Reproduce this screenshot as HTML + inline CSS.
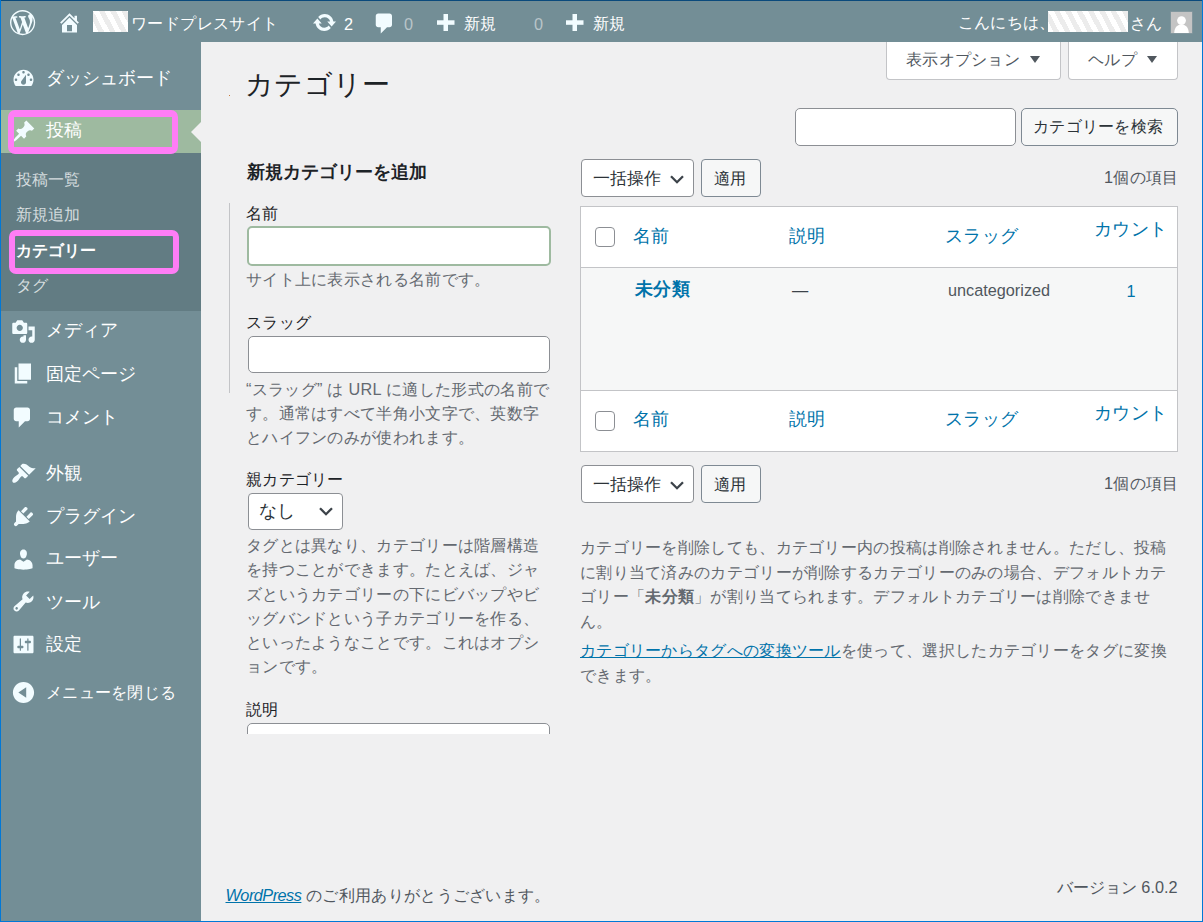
<!DOCTYPE html>
<html lang="ja"><head><meta charset="utf-8"><title>カテゴリー</title>
<style>
html,body{margin:0;padding:0}
body{width:1203px;height:922px;overflow:hidden;position:relative;background:#f0f0f1;font-family:"Liberation Sans",sans-serif;font-size:16.25px;color:#3c434a}
.a{position:absolute}
.t{position:absolute;white-space:nowrap;line-height:20px}
svg{position:absolute;overflow:visible}
.ab{color:#fff}
.mi{font-size:17.5px;color:#fff;left:46px}
.sm{font-size:16.25px;color:#d5dddf;left:16px}
.ic{fill:#f2fcff}
.box{position:absolute;box-sizing:border-box}
.lnk{color:#0073aa}
.th{font-size:17.5px}
#main .t{letter-spacing:.3px;margin-top:-.8px}
#menu .t{margin-top:-.6px}
#adminbar .t{letter-spacing:.4px}
.desc{color:#646970}
.stripe{background:repeating-linear-gradient(62deg,#fff 0 5px,#ececec 5px 10px)}
</style></head>
<body>
<!-- window borders -->
<div class="a" style="left:0;top:0;width:1203px;height:1px;background:#0a4a7c"></div>
<div class="a" style="left:0;top:0;width:1px;height:922px;background:#0078d7"></div>
<div class="a" style="left:1202px;top:0;width:1px;height:922px;background:#0078d7"></div>
<div class="a" style="left:0;top:921px;width:1203px;height:1px;background:#0078d7"></div>

<!-- admin bar -->
<div class="a" style="left:1px;top:1px;width:1201px;height:41px;background:#738e96"></div>
<!-- sidebar -->
<div class="a" style="left:1px;top:42px;width:200px;height:879px;background:#738e96"></div>
<div class="a" style="left:1px;top:110px;width:200px;height:43px;background:#9ebaa0"></div>
<div class="a" style="left:1px;top:153px;width:200px;height:158px;background:#627c83"></div>
<svg style="left:191px;top:122px" width="10" height="20"><path d="M10 0L0 10L10 20Z" fill="#f0f0f1"/></svg>

<div id="adminbar">
<svg style="left:9.8px;top:9.6px" width="25.2" height="25.2" viewBox="0 0 20 20"><path class="ic" fill-rule="evenodd" d="M20 10c0-5.51-4.490-10-10-10C4.48 0 0 4.49 0 10c0 5.52 4.48 10 10 10 5.51 0 10-4.48 10-10zM7.78 15.37L4.37 6.22c.55-.02 1.17-.08 1.17-.08.5-.06.44-1.13-.06-1.11 0 0-1.45.11-2.37.11-.18 0-.37 0-.58-.01C4.12 2.69 6.87 1.11 10 1.11c2.33 0 4.45.87 6.05 2.34-.68-.11-1.65.39-1.65 1.58 0 .74.45 1.36.9 2.1.35.61.55 1.36.55 2.46 0 1.49-1.4 5-1.4 5l-3.03-8.37c.54-.02.82-.17.82-.17.5-.05.44-1.25-.06-1.22 0 0-1.44.12-2.38.12-.87 0-2.33-.12-2.33-.12-.5-.03-.56 1.2-.06 1.22l.92.08 1.26 3.41zM17.41 10c.24-.64.74-1.87.43-4.25.7 1.29 1.05 2.71 1.05 4.25 0 3.29-1.73 6.24-4.4 7.78.97-2.59 1.94-5.2 2.92-7.78zM6.1 18.09C3.12 16.65 1.11 13.53 1.11 10c0-1.3.23-2.48.72-3.59C3.25 10.3 4.67 14.2 6.1 18.09zm4.03-6.63l2.58 6.980c-.86.29-1.76.45-2.710.45-.79 0-1.570-.11-2.29-.33.81-2.38 1.62-4.74 2.42-7.1z"/></svg>
<svg style="left:57px;top:10px" width="25" height="25" viewBox="0 0 20 20"><path class="ic" d="M16 8.5l1.53 1.53-1.06 1.06L10 4.62l-6.47 6.47-1.06-1.06L10 2.5l4 4v-2h2v4zm-6-2.46l6 5.99V18H4v-5.97zM12 17v-5H8v5h4z" fill-rule="evenodd"/></svg>
<div class="a stripe" style="left:93px;top:11px;width:35px;height:21px"></div>
<div class="t ab" style="left:131px;top:13px">ワードプレスサイト</div>
<svg style="left:312px;top:10px" width="25" height="25" viewBox="0 0 20 20"><path class="ic" d="M10.2 3.28c3.53 0 6.430 2.61 6.92 6h2.08l-3.5 4-3.5-4h2.32c-.45-1.97-2.21-3.45-4.32-3.45-1.45 0-2.73.71-3.54 1.78L4.950 5.66C6.23 4.2 8.11 3.28 10.2 3.28zm-.4 13.44c-3.52 0-6.43-2.61-6.920-6H.8l3.5-4c1.17 1.33 2.33 2.67 3.5 4H5.48c.45 1.97 2.21 3.45 4.32 3.45 1.45 0 2.73-.71 3.54-1.78l1.71 1.95c-1.28 1.46-3.15 2.38-5.25 2.38z"/></svg>
<div class="t ab" style="left:344px;top:14px">2</div>
<svg style="left:372px;top:11px" width="25" height="25" viewBox="0 0 20 20"><path class="ic" d="M5 2h9c1.1 0 2 .9 2 2v7c0 1.1-.9 2-2 2h-2l-5 5v-5H5c-1.1 0-2-.9-2-2V4c0-1.1.9-2 2-2z"/></svg>
<div class="t" style="left:404px;top:14px;color:#b9c5c9">0</div>
<svg style="left:437px;top:14px" width="18" height="17"><rect x="6.5" y="0" width="4.5" height="17" fill="#f2fcff"/><rect x="0" y="6.3" width="17.5" height="4.5" fill="#f2fcff"/></svg>
<div class="t ab" style="left:464px;top:13px">新規</div>
<div class="t" style="left:534px;top:14px;color:#b9c5c9">0</div>
<svg style="left:566px;top:14px" width="18" height="17"><rect x="6.5" y="0" width="4.5" height="17" fill="#f2fcff"/><rect x="0" y="6.3" width="17.5" height="4.5" fill="#f2fcff"/></svg>
<div class="t ab" style="left:593px;top:13px">新規</div>
<div class="t ab" style="left:957.5px;top:11.5px">こんにちは、</div>
<div class="a stripe" style="left:1048px;top:11px;width:80px;height:21px"></div>
<div class="t ab" style="left:1130px;top:13px">さん</div>
<div class="a" style="left:1170.5px;top:11.5px;width:21px;height:21.5px;background:#c4c4c4;overflow:hidden;box-shadow:0 0 0 .6px #8d9ea4">
 <svg style="left:0;top:0" width="21" height="22"><circle cx="10.5" cy="8.6" r="4.4" fill="#fff"/><path d="M3.2 21.5C3.2 15.5 6.5 12.6 10.5 12.6S17.8 15.5 17.8 21.5Z" fill="#fff"/></svg>
</div>
</div>
<div id="menu">
<svg style="left:10.8px;top:65.9px" width="25" height="25" viewBox="0 0 20 20"><path class="ic" fill-rule="evenodd" d="M3.76 16h12.48c1.1-1.37 1.76-3.11 1.76-5 0-4.42-3.58-8-8-8s-8 3.58-8 8c0 1.89.66 3.63 1.760 5zM10 4c.55 0 1 .45 1 1s-.45 1-1 1-1-.45-1-1 .45-1 1-1zM6 6c.55 0 1 .45 1 1s-.45 1-1 1-1-.45-1-1 .45-1 1-1zm8 0c.55 0 1 .45 1 1s-.45 1-1 1-1-.45-1-1 .45-1 1-1zm-5.37 5.55L12 7v6c0 1.1-.9 2-2 2s-2-.9-2-2c0-.57.24-1.08.63-1.45zM4 10c.55 0 1 .45 1 1s-.45 1-1 1-1-.45-1-1 .45-1 1-1zm12 0c.55 0 1 .45 1 1s-.45 1-1 1-1-.45-1-1 .45-1 1-1z"/></svg>
<div class="t mi" style="top:68.4px">ダッシュボード</div>

<svg style="left:11.3px;top:119.2px" width="25" height="25" viewBox="0 0 20 20"><path class="ic" d="M10.44 3.02l1.82-1.82 6.36 6.35-1.83 1.82c-1.05-.68-2.48-.57-3.41.36l-.75.75c-.92.93-1.04 2.35-.35 3.41l-1.83 1.82-2.41-2.41-2.8 2.79c-.42.42-3.38 2.71-3.8 2.29s1.86-3.39 2.28-3.81l2.79-2.79L4.1 9.360l1.83-1.82c1.05.69 2.48.57 3.4-.36l.75-.75c.93-.92 1.05-2.35.36-3.41z"/></svg>
<div class="t mi" style="top:121px">投稿</div>

<div class="t sm" style="top:169.6px">投稿一覧</div>
<div class="t sm" style="top:205px">新規追加</div>
<div class="t sm" style="top:240.7px;color:#fff;font-weight:bold">カテゴリー</div>
<div class="t sm" style="top:275.5px">タグ</div>

<svg style="left:10.75px;top:318.75px" width="25" height="25" viewBox="0 0 20 20"><path class="ic" fill-rule="evenodd" d="M13 11V4c0-.55-.45-1-1-1h-1.67L9 1H5L3.67 3H2c-.55 0-1 .45-1 1v7c0 .55.45 1 1 1h10c.55 0 1-.45 1-1zM7 4.5c1.38 0 2.5 1.12 2.5 2.5S8.38 9.5 7 9.5 4.5 8.38 4.5 7 5.62 4.5 7 4.5zM14 6h5v10.5c0 1.38-1.12 2.5-2.5 2.5S14 17.880 14 16.5s1.12-2.5 2.5-2.5c.17 0 .34.02.5.05V9h-3V6zm-4 8.05V13h2v3.5c0 1.38-1.12 2.5-2.5 2.5S7 17.88 7 16.5 8.12 14 9.5 14c.17 0 .34.02.5.05z"/></svg>
<div class="t mi" style="top:320.7px">メディア</div>

<svg style="left:10.85px;top:361px" width="25" height="25" viewBox="0 0 20 20"><path class="ic" d="M6 15V2h10v13H6zm-1 1h8v2H3V5h2v11z"/></svg>
<div class="t mi" style="top:364.4px">固定ページ</div>

<svg style="left:10.25px;top:404.5px" width="25" height="25" viewBox="0 0 20 20"><path class="ic" d="M5 2h9c1.1 0 2 .9 2 2v7c0 1.1-.9 2-2 2h-2l-5 5v-5H5c-1.1 0-2-.9-2-2V4c0-1.1.9-2 2-2z"/></svg>
<div class="t mi" style="top:407.2px">コメント</div>

<svg style="left:11.1px;top:460.5px" width="25" height="25" viewBox="0 0 20 20"><path class="ic" d="M14.48 11.06L7.41 3.99l1.5-1.5c.5-.56 2.3-.47 3.51.32 1.21.8 1.43 1.28 2.91 2.1 1.18.64 2.45 1.26 4.45.85zm-.71.71L6.7 4.7 4.93 6.47c-.39.39-.39 1.02 0 1.41l1.06 1.06c.39.39.39 1.03 0 1.42-.6.6-1.43 1.11-2.21 1.69-.35.26-.7.53-1.01.84C1.43 14.23.4 16.08 1.4 17.07c.99 1 2.84-.03 4.18-1.36.31-.31.58-.66.85-1.020.57-.78 1.08-1.61 1.69-2.21.39-.39 1.02-.39 1.41 0l1.06 1.06c.39.39 1.02.39 1.41 0z"/></svg>
<div class="t mi" style="top:464px">外観</div>

<svg style="left:11px;top:503.5px" width="25" height="25" viewBox="0 0 20 20"><path class="ic" d="M13.11 4.36L9.87 7.6 8 5.73l3.24-3.24c.35-.34 1.05-.2 1.56.32.52.51.66 1.21.31 1.55zm-8 1.77l.91-1.12 9.01 9.01-1.19.84c-.71.71-2.63 1.16-3.82 1.16H6.14L4.9 17.26c-.59.59-1.54.59-2.12 0-.59-.58-.59-1.530 0-2.12l1.24-1.24v-3.88c0-1.13.4-3.19 1.09-3.89zm7.26 3.97l3.24-3.24c.34-.35 1.04-.21 1.55.31.52.51.66 1.21.31 1.55l-3.24 3.25z"/></svg>
<div class="t mi" style="top:506.5px">プラグイン</div>

<svg style="left:10.55px;top:546.5px" width="25" height="25" viewBox="0 0 20 20"><path class="ic" d="M10 9.25c-2.27 0-2.73-3.44-2.73-3.44C7 4.02 7.82 2 9.970 2c2.16 0 2.98 2.02 2.71 3.81 0 0-.41 3.44-2.68 3.44zm0 2.57L12.72 10c2.39 0 4.52 2.33 4.52 4.53v2.49s-3.65 1.13-7.24 1.13c-3.65 0-7.24-1.13-7.24-1.13v-2.49c0-2.25 1.94-4.48 4.47-4.48z"/></svg>
<div class="t mi" style="top:548.5px">ユーザー</div>

<svg style="left:11px;top:589px" width="25" height="25" viewBox="0 0 20 20"><path class="ic" fill-rule="evenodd" d="M16.68 9.77c-1.34 1.34-3.3 1.67-4.95.99l-5.41 6.52c-.99.99-2.59.99-3.58 0s-.99-2.59 0-3.57l6.52-5.42c-.68-1.65-.35-3.61.99-4.95 1.28-1.28 3.12-1.62 4.72-1.06l-2.89 2.89 2.82 2.82 2.86-2.87c.53 1.58.18 3.39-1.08 4.65zM3.81 16.21c.4.39 1.04.39 1.43 0 .4-.4.4-1.04 0-1.43-.39-.4-1.03-.4-1.430 0-.39.39-.39 1.03 0 1.43z"/></svg>
<div class="t mi" style="top:593px">ツール</div>

<svg style="left:11.3px;top:632px" width="25" height="25" viewBox="0 0 20 20"><path class="ic" fill-rule="evenodd" d="M18 16V4c0-.55-.45-1-1-1H3c-.55 0-1 .45-1 1v12c0 .55.45 1 1 1h14c.55 0 1-.45 1-1zM8 11h1c.55 0 1 .45 1 1s-.45 1-1 1H8v1.5c0 .28-.22.5-.5.5s-.5-.22-.5-.5V13H6c-.55 0-1-.45-1-1s.45-1 1-1h1V5.5c0-.28.22-.5.5-.5s.5.22.5.5V11zm5-2h-1c-.55 0-1-.45-1-1s.45-1 1-1h1V5.5c0-.28.22-.5.5-.5s.5.22.5.5V7h1c.55 0 1 .45 1 1s-.45 1-1 1h-1v5.5c0 .28-.22.5-.5.5s-.5-.22-.5-.5V9z"/></svg>
<div class="t mi" style="top:635px">設定</div>

<svg style="left:10.3px;top:678.8px" width="27" height="27" viewBox="0 0 20 20"><path class="ic" fill-rule="evenodd" d="M10 2.16c4.33 0 7.84 3.51 7.84 7.84S14.33 17.84 10 17.84 2.16 14.33 2.16 10 5.71 2.16 10 2.16zm2 11.72V6.12L6.18 9.97z"/></svg>
<div class="t mi" style="top:682.6px;font-size:16.25px;letter-spacing:.3px">メニューを閉じる</div>

<!-- annotation boxes -->
<div class="box" style="left:8px;top:110px;width:169.5px;height:44px;border:6px solid #ff7df6;border-width:7px 6px;border-radius:7px"></div>
<div class="box" style="left:9px;top:230px;width:169.5px;height:43.5px;border:6px solid #ff7df6;border-radius:7px"></div>
</div>
<div id="main">
<!-- screen options / help -->
<div class="box" style="left:886px;top:42px;width:175px;height:38px;background:#fff;border:1px solid #c3c4c7;border-top:0;border-radius:0 0 4px 4px"></div>
<div class="t" style="left:906px;top:50px;color:#50575e">表示オプション</div>
<svg style="left:1029.5px;top:56px" width="10" height="7"><path d="M0 0H10L5 7Z" fill="#50575e"/></svg>
<div class="box" style="left:1068px;top:42px;width:110px;height:38px;background:#fff;border:1px solid #c3c4c7;border-top:0;border-radius:0 0 4px 4px"></div>
<div class="t" style="left:1088px;top:50px;color:#50575e">ヘルプ</div>
<svg style="left:1147px;top:56px" width="10" height="7"><path d="M0 0H10L5 7Z" fill="#50575e"/></svg>

<div class="t" style="left:245px;top:65.5px;font-size:27.6px;line-height:40px;color:#1d2327;font-weight:300">カテゴリー</div>
<div class="a" style="left:229px;top:95px;width:1px;height:1px;background:#c87a3a"></div>

<!-- search -->
<div class="box" style="left:795px;top:108px;width:221px;height:38px;background:#fff;border:1px solid #8c8f94;border-radius:5px"></div>
<div class="box" style="left:1021px;top:108px;width:157px;height:38px;background:#f6f7f7;border:1px solid #7e8993;border-radius:5px"></div>
<div class="t" style="left:1033px;top:117px;color:#2c3338">カテゴリーを検索</div>

<!-- left column -->
<div class="t" style="left:246.5px;top:162.3px;letter-spacing:0;font-size:17.6px;font-weight:bold;color:#1d2327">新規カテゴリーを追加</div>
<div class="a" style="left:229px;top:203px;width:1px;height:190px;background:#c3c4c7"></div>
<div class="t" style="left:246px;top:203.5px;color:#1d2327">名前</div>
<div class="box" style="left:247px;top:226px;width:304px;height:40px;background:#fff;border:2px solid #9ebaa0;border-radius:5px"></div>
<div class="t desc" style="left:246px;top:270px">サイト上に表示される名前です。</div>
<div class="t" style="left:246px;top:313px;color:#1d2327">スラッグ</div>
<div class="box" style="left:248px;top:336px;width:302px;height:37px;background:#fff;border:1px solid #8c8f94;border-radius:5px"></div>
<div class="t desc" style="left:246px;top:377.4px;line-height:24.4px">“スラッグ” は URL に適した形式の名前で<br>す。通常はすべて半角小文字で、英数字<br>とハイフンのみが使われます。</div>
<div class="t" style="left:246px;top:470px;color:#1d2327">親カテゴリー</div>
<div class="box" style="left:248px;top:493px;width:95px;height:37px;background:#fff;border:1px solid #8c8f94;border-radius:4px"></div>
<div class="t" style="left:259px;top:502px;color:#2c3338;font-size:17.5px">なし</div>
<svg style="left:319px;top:507px" width="15" height="10"><path d="M1 1.2L7 7.2L13 1.2" fill="none" stroke="#3c434a" stroke-width="2.3"/></svg>
<div class="t desc" style="left:246px;top:533.9px;line-height:24.2px">タグとは異なり、カテゴリーは階層構造<br>を持つことができます。たとえば、ジャ<br>ズというカテゴリーの下にビバップやビ<br>ッグバンドという子カテゴリーを作る、<br>といったようなことです。これはオプシ<br>ョンです。</div>
<div class="t" style="left:246px;top:699.5px;color:#1d2327">説明</div>
<div class="a" style="left:247px;top:723px;width:303px;height:11px;overflow:hidden">
 <div class="box" style="left:0;top:0;width:303px;height:60px;background:#fff;border:1px solid #8c8f94;border-radius:5px"></div>
</div>

<!-- table nav top -->
<div class="box" style="left:581px;top:159px;width:113px;height:38px;background:#fff;border:1px solid #8c8f94;border-radius:4px"></div>
<div class="t" style="left:593px;top:169.5px;color:#2c3338;font-size:16.9px;letter-spacing:0">一括操作</div>
<svg style="left:669.5px;top:174.5px" width="15" height="10"><path d="M1 1.2L7 7.2L13 1.2" fill="none" stroke="#3c434a" stroke-width="2.3"/></svg>
<div class="box" style="left:701px;top:159px;width:60px;height:38px;background:#f6f7f7;border:1px solid #7e8993;border-radius:4px"></div>
<div class="t" style="left:714px;top:168.6px;color:#2c3338">適用</div>
<div class="t" style="left:1104px;top:167.5px;color:#50575e">1個の項目</div>

<!-- table -->
<div class="box" style="left:580px;top:206px;width:598px;height:246px;background:#fff;border:1px solid #c3c4c7"></div>
<div class="a" style="left:581px;top:267px;width:596px;height:1px;background:#c3c4c7"></div>
<div class="a" style="left:581px;top:268px;width:596px;height:122px;background:#f6f7f7"></div>
<div class="a" style="left:581px;top:390px;width:596px;height:1px;background:#c3c4c7"></div>
<div class="box" style="left:595px;top:227px;width:20px;height:20px;background:#fff;border:1px solid #8c8f94;border-radius:4px"></div>
<div class="t lnk th" style="left:633px;top:227.2px">名前</div>
<div class="t lnk th" style="left:789px;top:227.2px">説明</div>
<div class="t lnk th" style="left:945px;top:227.2px">スラッグ</div>
<div class="t lnk th" style="left:1094px;top:219.5px">カウント</div>
<div class="t lnk th" style="left:635px;top:279.9px;font-weight:bold">未分類</div>
<div class="t" style="left:792px;top:280.8px;color:#3c434a;letter-spacing:0">—</div>
<div class="t" style="left:948px;top:281px;color:#50575e;letter-spacing:0">uncategorized</div>
<div class="t lnk" style="left:1126.5px;top:282px;letter-spacing:0">1</div>
<div class="box" style="left:595px;top:411px;width:20px;height:20px;background:#fff;border:1px solid #8c8f94;border-radius:4px"></div>
<div class="t lnk th" style="left:633px;top:410px">名前</div>
<div class="t lnk th" style="left:789px;top:410px">説明</div>
<div class="t lnk th" style="left:945px;top:410px">スラッグ</div>
<div class="t lnk th" style="left:1094px;top:403.7px">カウント</div>

<!-- table nav bottom -->
<div class="box" style="left:581px;top:465px;width:113px;height:38px;background:#fff;border:1px solid #8c8f94;border-radius:4px"></div>
<div class="t" style="left:593px;top:475.5px;color:#2c3338;font-size:16.9px;letter-spacing:0">一括操作</div>
<svg style="left:669.5px;top:480.5px" width="15" height="10"><path d="M1 1.2L7 7.2L13 1.2" fill="none" stroke="#3c434a" stroke-width="2.3"/></svg>
<div class="box" style="left:701px;top:465px;width:60px;height:38px;background:#f6f7f7;border:1px solid #7e8993;border-radius:4px"></div>
<div class="t" style="left:714px;top:474.6px;color:#2c3338">適用</div>
<div class="t" style="left:1104px;top:473.5px;color:#50575e">1個の項目</div>

<!-- note -->
<div class="t desc" style="left:580px;top:535.8px;line-height:24.5px">カテゴリーを削除しても、カテゴリー内の投稿は削除されません。ただし、投稿<br>に割り当て済みのカテゴリーが削除するカテゴリーのみの場合、デフォルトカテ<br>ゴリー「<b>未分類</b>」が割り当てられます。デフォルトカテゴリーは削除できませ<br>ん。</div>
<div class="t desc" style="left:580px;top:638.8px;line-height:24.5px"><span class="lnk" style="text-decoration:underline">カテゴリーからタグへの変換ツール</span>を使って、選択したカテゴリーをタグに変換<br>できます。</div>

<!-- footer -->
<div class="t desc" style="left:225.5px;top:886px;color:#50575e"><i class="lnk" style="text-decoration:underline;letter-spacing:-.5px">WordPress</i> のご利用ありがとうございます。</div>
<div class="t" style="right:25.5px;top:877.8px;color:#50575e;letter-spacing:0">バージョン 6.0.2</div>
</div>
</body></html>
